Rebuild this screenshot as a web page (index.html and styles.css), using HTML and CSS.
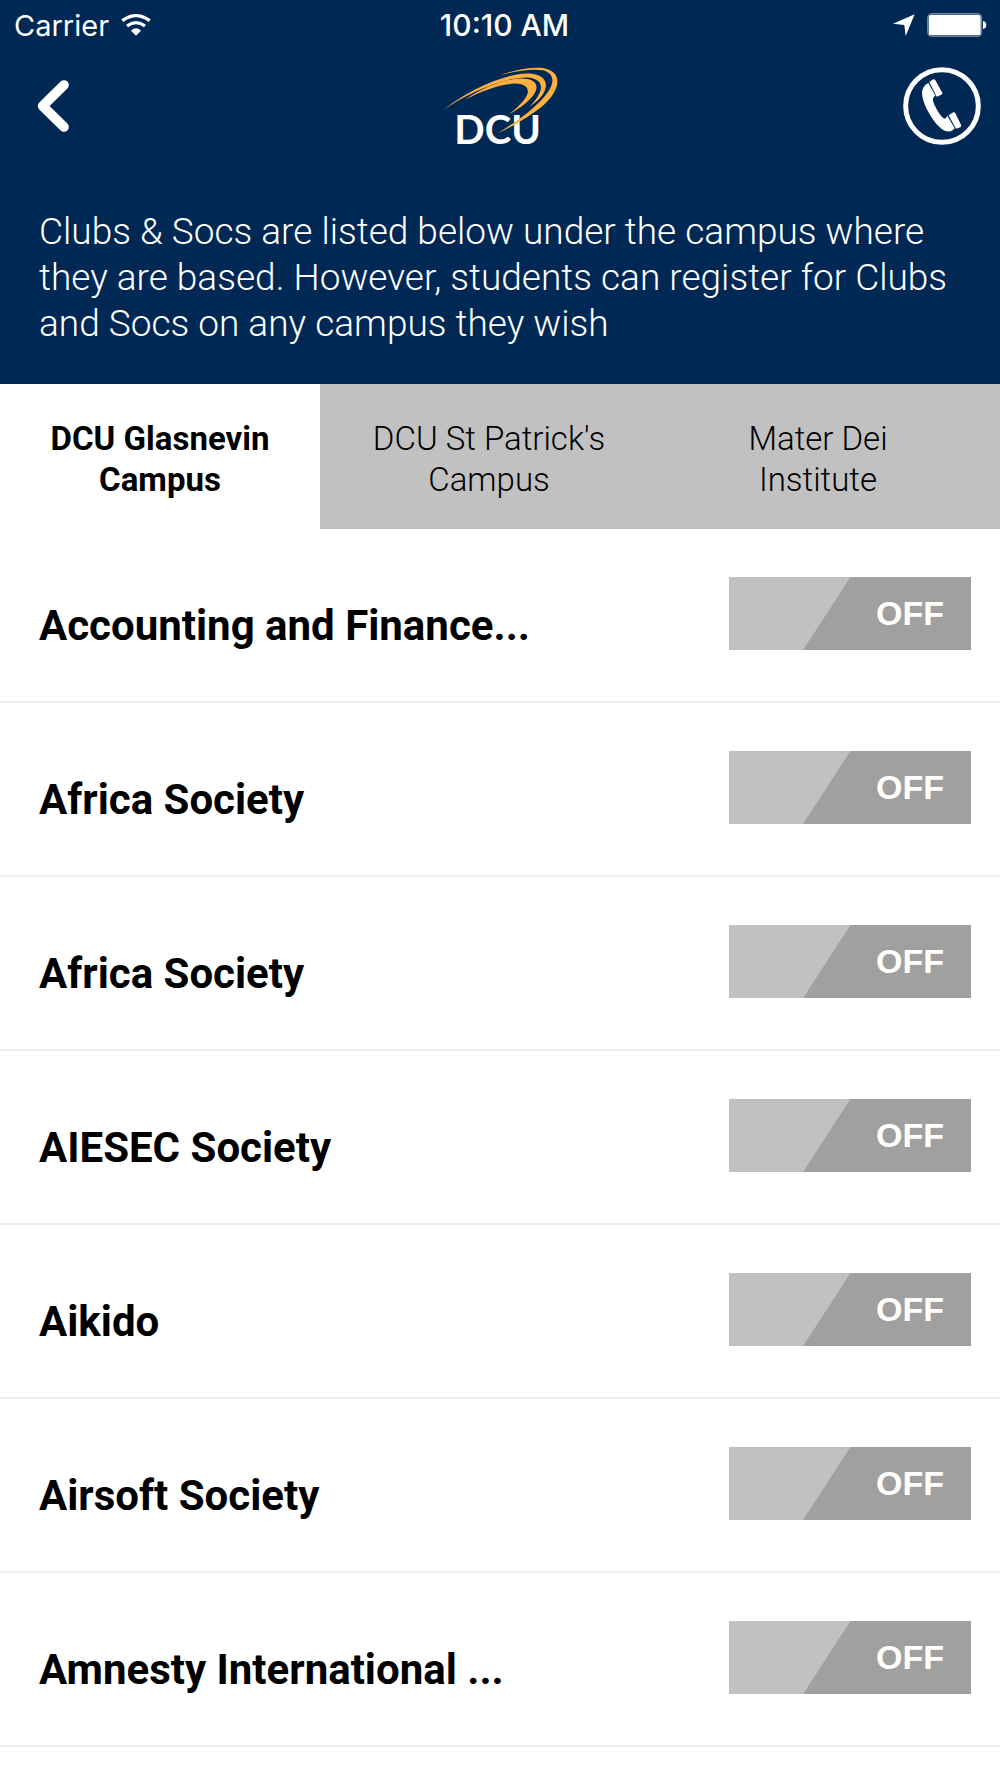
FILE: index.html
```html
<!DOCTYPE html>
<html lang="en">
<head>
<meta charset="utf-8">
<meta name="viewport" content="width=device-width, initial-scale=1">
<title>DCU Clubs &amp; Socs</title>
<link rel="stylesheet" href="styles.css">
</head>
<body>
<header class="header">
  <div class="status">
    <div class="status-left">
      <span>Carrier</span>
      <svg class="wifi" viewBox="0 0 90 66" aria-hidden="true">
        <path d="M4 20Q45-10 86 20" fill="none" stroke="#fff" stroke-width="10"/>
        <path d="M18 36Q45 16 72 36" fill="none" stroke="#fff" stroke-width="10"/>
        <path d="M30 50Q45 36 60 50L45 65Z" fill="#fff"/>
      </svg>
    </div>
    <time class="clock">10:10 AM</time>
    <div class="status-right">
      <svg class="location" viewBox="0 0 66 66" aria-hidden="true"><path d="M65 1L38 66L34 33L0 29Z" fill="#fff"/></svg>
      <svg class="battery" viewBox="0 0 180 72" aria-hidden="true">
        <rect x="2" y="2" width="162" height="68" rx="11" fill="none" stroke="#8394aa" stroke-width="3"/>
        <rect x="5" y="5" width="156" height="62" rx="8" fill="#fff"/>
        <path d="M168 24Q178 26 178 36T168 48Z" fill="#fff"/>
      </svg>
    </div>
  </div>
  <nav class="nav">
    <button class="icon-button back" type="button" aria-label="Back">
      <svg class="chevron" viewBox="0 0 96 156"><path d="M81 15L17 78L81 141" fill="none" stroke="#fff" stroke-width="29" stroke-linecap="round" stroke-linejoin="round"/></svg>
    </button>
    <svg class="logo" viewBox="60 195 360 249" role="img" aria-label="DCU">
      <text class="logo-text" x="103" y="432">DCU</text>
      <g fill="#fbb040">
        <path d="M70 330C145 268 270 212 340 222C396 231 388 284 328 320C369 279 379 242 330 233C263 226 143 278 70 330Z"/>
        <path d="M135 299C210 250 282 227 326 238C370 250 354 296 265 344C330 294 338 264 304 253C268 244 202 264 135 299Z"/>
        <path d="M238 226C290 208 338 200 373 205C440 220 416 288 343 337C302 365 266 386 232 400C279 371 309 350 340 323C400 271 418 226 369 211C335 205 288 213 238 226Z"/>
      </g>
    </svg>
    <button class="icon-button call" type="button" aria-label="Call">
      <svg class="phone" viewBox="0 0 234 234">
        <circle cx="117" cy="117" r="109" fill="none" stroke="#fff" stroke-width="15"/>
        <path d="M76 48L97 86Q84 91 94 113Q112 150 124 155Q130 153 133 146L155 184L149 190Q139 197 122 190C88 169 48 94 59 67Q64 53 76 48ZM79 45L88 38Q94 35 98 41L118 77Q119 81 115 83L101 89ZM137 145L151 136Q155 135 157 139L174 173Q176 178 172 181L159 185Z" fill="#fff"/>
      </svg>
    </button>
  </nav>
  <p class="intro">Clubs &amp; Socs are listed below under the campus where they are based. However, students can register for Clubs and Socs on any campus they wish</p>
</header>
<div class="tabs" role="tablist">
  <button class="tab tab-active" type="button" role="tab" aria-selected="true">DCU Glasnevin<br>Campus</button>
  <button class="tab" type="button" role="tab" aria-selected="false">DCU St Patrick's<br>Campus</button>
  <button class="tab" type="button" role="tab" aria-selected="false">Mater Dei<br>Institute</button>
</div>
<main>
  <ul class="list">
    <li class="row"><label class="name" for="club-1">Accounting and Finance...</label><span class="switch"><input class="toggle" type="checkbox" id="club-1"><span class="state">OFF</span></span></li>
    <li class="row"><label class="name" for="club-2">Africa Society</label><span class="switch"><input class="toggle" type="checkbox" id="club-2"><span class="state">OFF</span></span></li>
    <li class="row"><label class="name" for="club-3">Africa Society</label><span class="switch"><input class="toggle" type="checkbox" id="club-3"><span class="state">OFF</span></span></li>
    <li class="row"><label class="name" for="club-4">AIESEC Society</label><span class="switch"><input class="toggle" type="checkbox" id="club-4"><span class="state">OFF</span></span></li>
    <li class="row"><label class="name" for="club-5">Aikido</label><span class="switch"><input class="toggle" type="checkbox" id="club-5"><span class="state">OFF</span></span></li>
    <li class="row"><label class="name" for="club-6">Airsoft Society</label><span class="switch"><input class="toggle" type="checkbox" id="club-6"><span class="state">OFF</span></span></li>
    <li class="row"><label class="name" for="club-7">Amnesty International ...</label><span class="switch"><input class="toggle" type="checkbox" id="club-7"><span class="state">OFF</span></span></li>
  </ul>
</main>
</body>
</html>
```
FILE: styles.css
```css
* { box-sizing: border-box; }

body {
  margin: 0;
  background: #fff;
  color: #000;
  font-family: Roboto, "Liberation Sans", sans-serif;
}

svg { display: block; }

button {
  border: 0;
  background: none;
  color: inherit;
  font: inherit;
  cursor: pointer;
}

.header {
  background: #002855;
  color: #fff;
}

.status {
  display: grid;
  grid-template-columns: 1fr auto 1fr;
  align-items: center;
  height: 50px;
  padding: 0 13px 0 14px;
  font-family: Inter, "Liberation Sans", sans-serif;
  font-size: 29px;
}

.status-left,
.status-right {
  display: flex;
  align-items: center;
  gap: 12px;
}

.status-right { justify-content: flex-end; }

.clock {
  padding-left: 8px;
  font-size: 30px;
  font-weight: 500;
}

.wifi { width: 30px; height: 22px; }
.location { width: 22px; height: 22px; }
.battery { width: 60px; height: 24px; }

.nav {
  display: grid;
  grid-template-columns: 1fr auto 1fr;
  align-items: center;
  height: 112px;
  padding: 0 19px;
}

.icon-button { padding: 0; }
.back { justify-self: start; padding: 0 18px; }
.call { justify-self: end; }
.chevron { width: 32px; height: 52px; }
.phone { width: 78px; height: 78px; }
.logo { width: 120px; height: 83px; overflow: visible; }

.logo-text {
  fill: #fff;
  font-family: Lato, sans-serif;
  font-size: 120px;
  font-weight: 700;
}

.intro {
  margin: 0;
  padding: 47px 36px 37px 39px;
  font-size: 37px;
  font-weight: 300;
  line-height: 46px;
}

.tabs {
  display: grid;
  grid-template-columns: 320fr 338fr 320fr;
  padding-right: 22px;
  background: #c1c1c1;
}

.tab {
  padding: 34px 0 29px;
  font-size: 33px;
  font-weight: 300;
  line-height: 41px;
}

.tab-active {
  background: #fff;
  font-weight: 700;
}

.list {
  margin: 0;
  padding: 0;
  list-style: none;
}

.row {
  display: flex;
  align-items: flex-start;
  justify-content: space-between;
  gap: 24px;
  padding: 48px 29px 51px 39px;
  border-bottom: 2px solid #eee;
}

.name {
  padding-top: 25px;
  font-size: 42px;
  font-weight: 700;
  line-height: 48px;
}

.switch {
  display: grid;
  flex: none;
  grid-template-columns: 242px;
  align-items: center;
}

.toggle,
.state { grid-area: 1 / 1; }

.toggle {
  width: 100%;
  height: 73px;
  margin: 0;
  appearance: none;
  background: linear-gradient(123deg, #c1c1c1 calc(50% - 20px), #a0a0a0 calc(50% - 19px));
  cursor: pointer;
}

.state {
  justify-self: end;
  padding-right: 27px;
  color: #fff;
  font-family: "Liberation Sans", sans-serif;
  font-size: 34px;
  font-weight: 700;
  pointer-events: none;
}
```
